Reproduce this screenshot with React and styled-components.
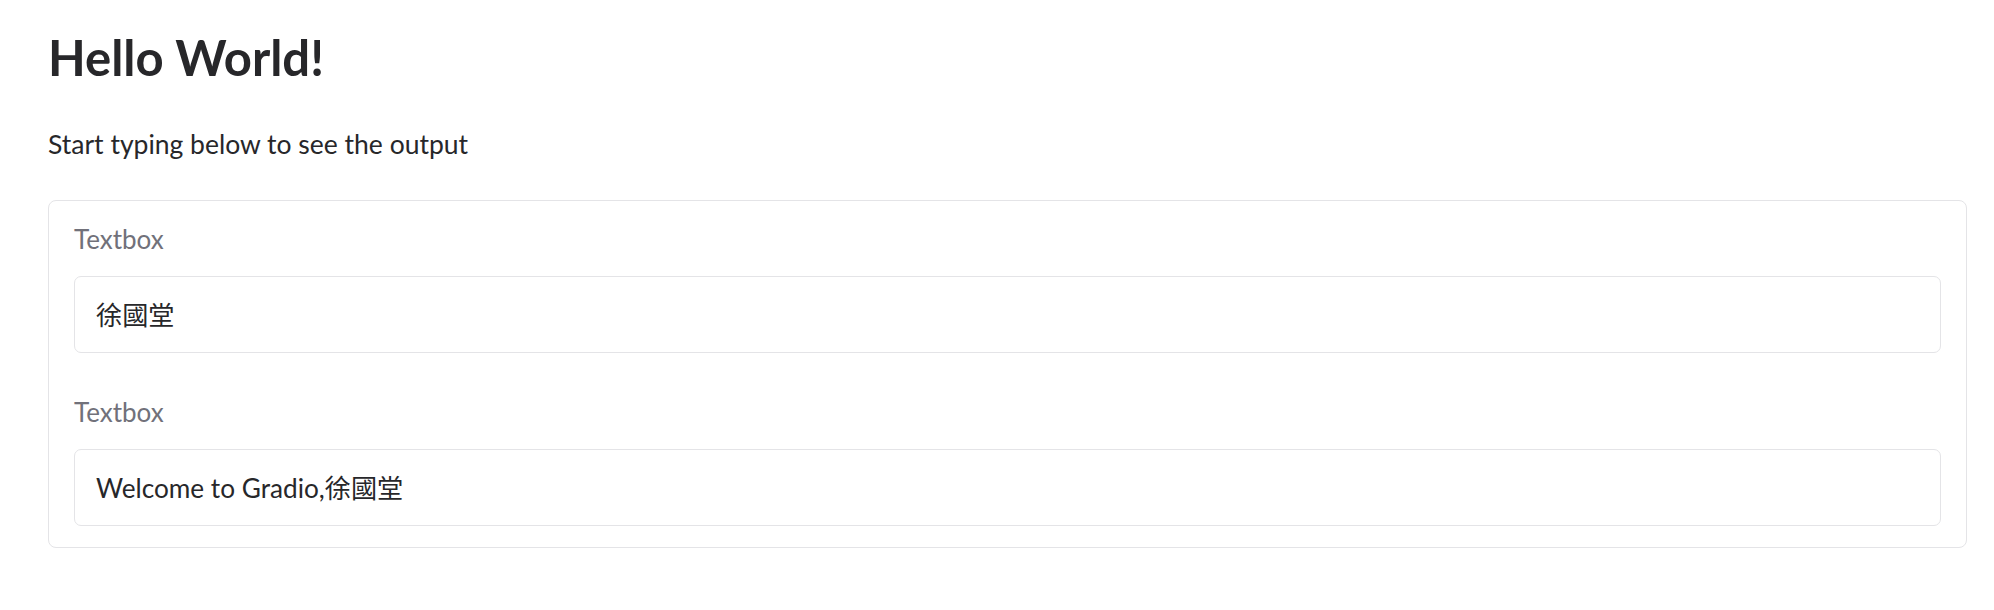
import React from "react";
import styled, { createGlobalStyle } from "styled-components";

const GlobalStyle = createGlobalStyle`
  html, body {
    margin: 0;
    padding: 0;
    background: #ffffff;
  }
  body {
    font-family: Lato, "Noto Sans CJK TC", sans-serif;
    color: #27272a;
  }
`;

const Page = styled.div`
  padding: 28px 27px 40px 48px;
`;

const Title = styled.h1`
  margin: 0;
  font-size: 49px;
  line-height: 1.2;
  font-weight: 700;
  color: #27272a;
`;

const Lead = styled.p`
  margin: 36px 0 0;
  font-size: 26.5px;
  line-height: 42px;
  color: #27272a;
`;

const Panel = styled.div`
  margin-top: 35px;
  width: 1919px;
  box-sizing: border-box;
  border: 1px solid #e4e4e7;
  border-radius: 8px;
  padding: 19px 25px 21px;
  display: flex;
  flex-direction: column;
  gap: 40px;
`;

const Field = styled.label`
  display: flex;
  flex-direction: column;
  gap: 18px;
`;

const FieldLabel = styled.span`
  font-size: 26px;
  line-height: 38px;
  color: #71717a;
`;

const Input = styled.div`
  box-sizing: border-box;
  height: 77px;
  border: 1px solid #e4e4e7;
  border-radius: 7px;
  padding: 0 21px;
  display: flex;
  align-items: center;
  font-size: 26.2px;
  color: #27272a;
  font-family: Lato, "Noto Sans CJK TC", sans-serif;
`;

const fields = [
  { label: "Textbox", value: "徐國堂" },
  { label: "Textbox", value: "Welcome to Gradio,徐國堂" },
];

export default function App() {
  return (
    <>
      <GlobalStyle />
      <Page>
        <Title>Hello World!</Title>
        <Lead>Start typing below to see the output</Lead>
        <Panel>
          {fields.map((f, i) => (
            <Field key={i}>
              <FieldLabel>{f.label}</FieldLabel>
              <Input>{f.value}</Input>
            </Field>
          ))}
        </Panel>
      </Page>
    </>
  );
}
